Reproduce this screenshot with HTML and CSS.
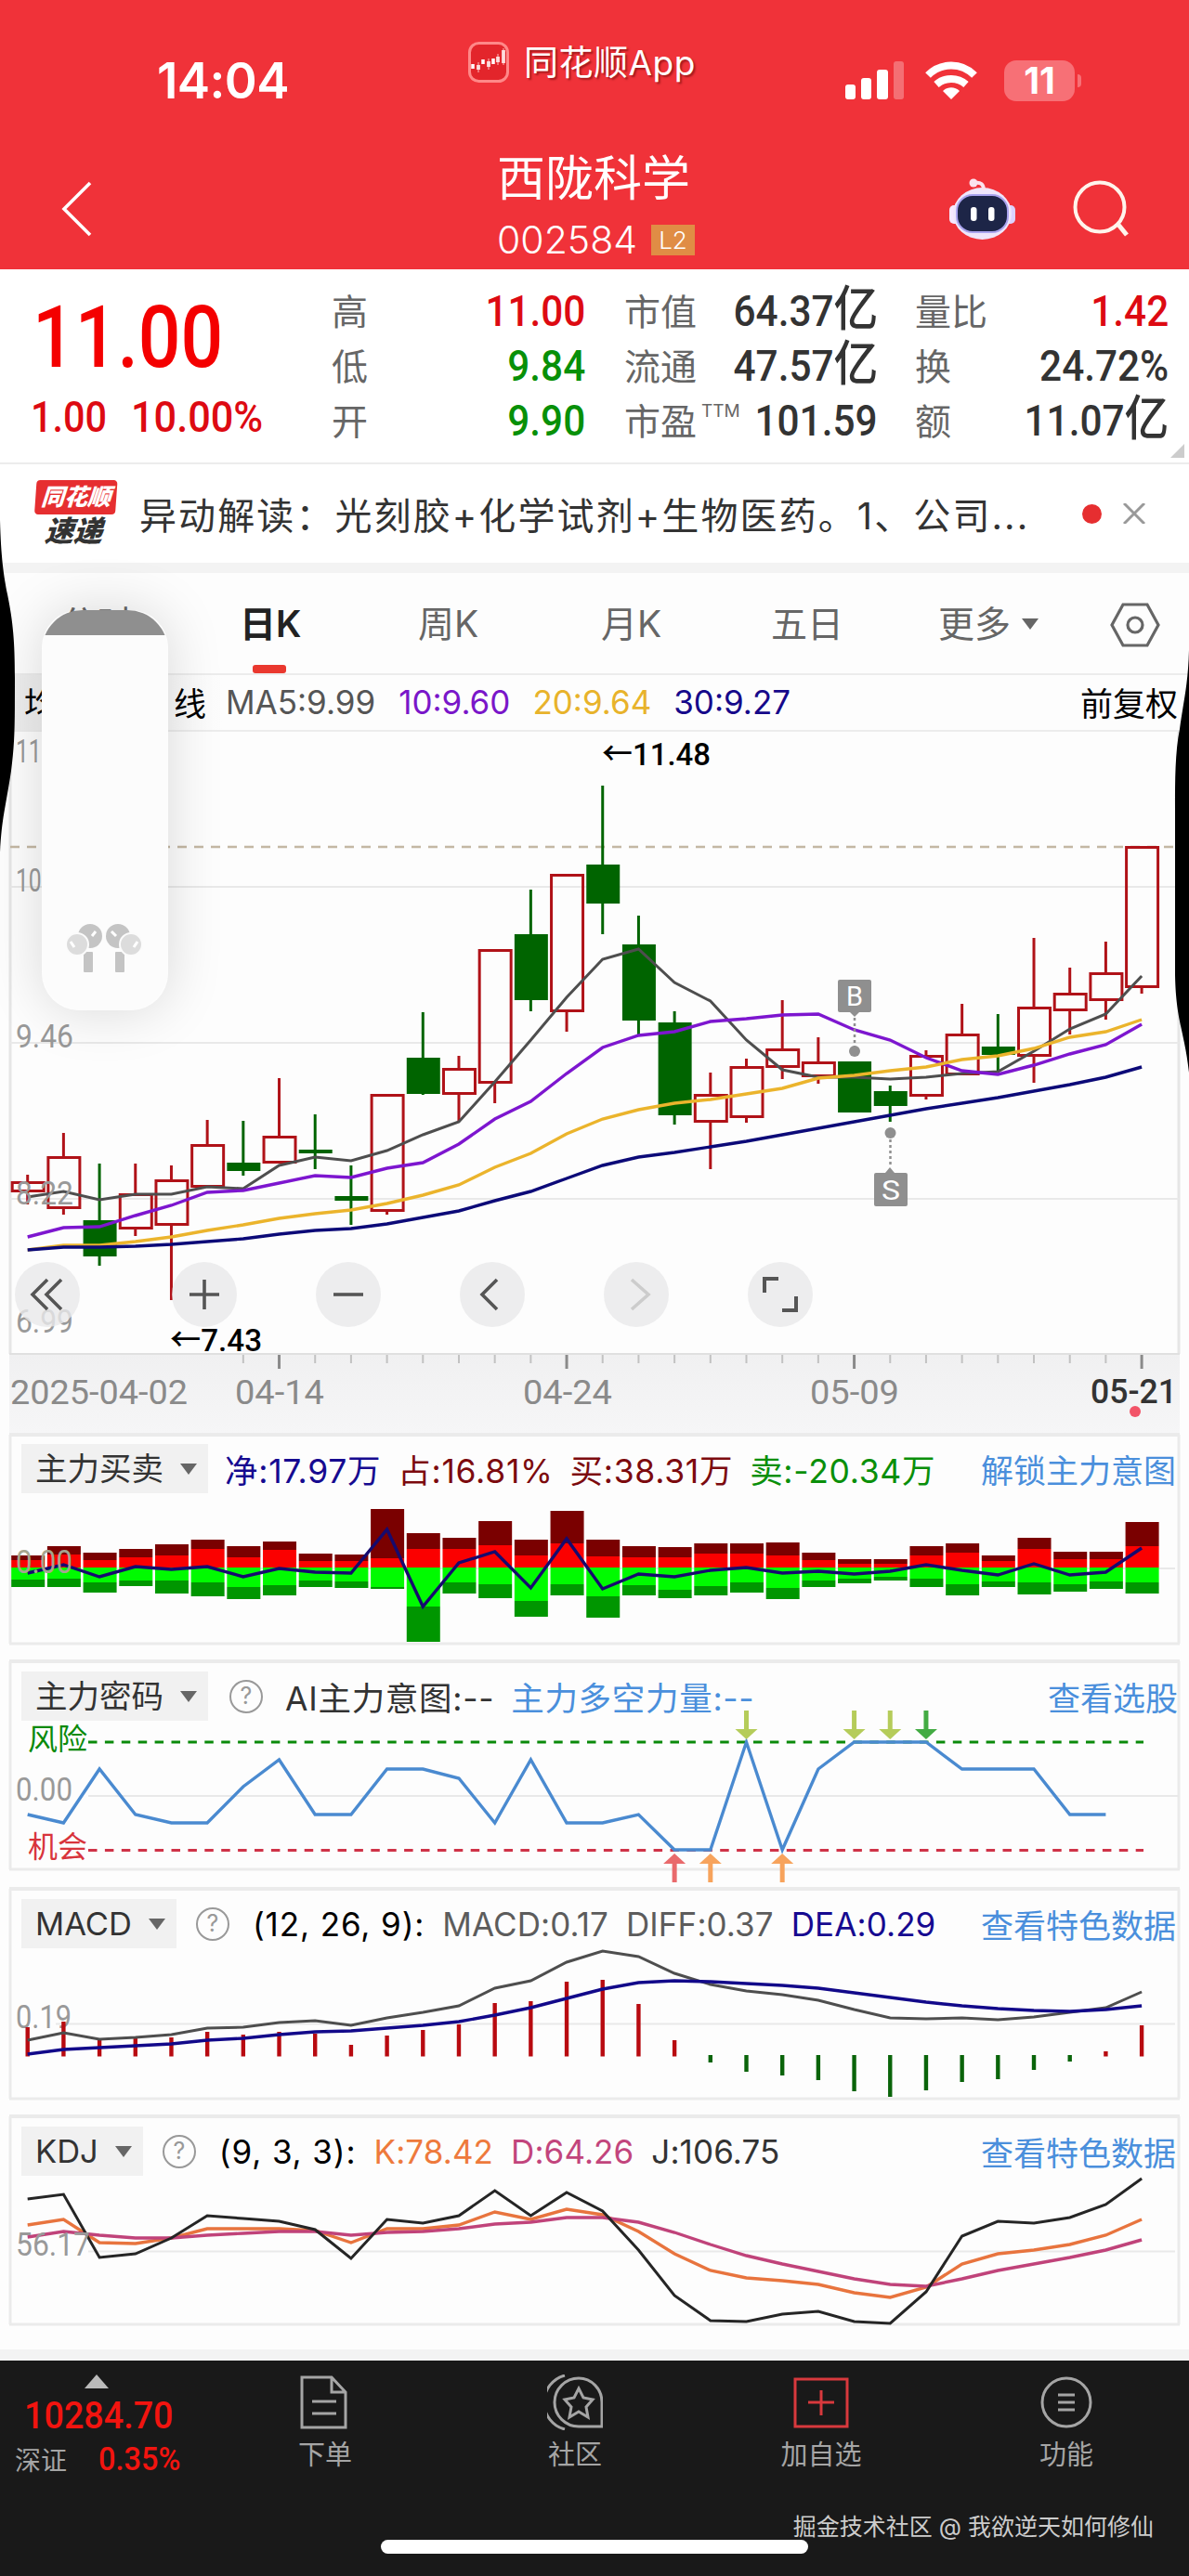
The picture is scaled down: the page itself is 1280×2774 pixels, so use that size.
FILE: index.html
```html
<!DOCTYPE html>
<html lang="zh-CN">
<head>
  <meta charset="UTF-8" />
  <meta name="viewport" content="width=device-width, initial-scale=1" />
  <title>西陇科学 002584</title>
  <link rel="stylesheet" href="styles.css">
</head>
<body>

  <header class="top">
    <div class="status">
      <div class="clock">14:04</div>
      <div class="app-tag">
        <svg class="app-logo" viewBox="0 0 44 44">
          <rect x="1.5" y="1.5" width="41" height="41" rx="10" fill="#e3252b" stroke="#f88" stroke-width="3"/>
          <path d="M5 24v5M11 25v5M16 19v5M22 21v6M27 18v6M32 16v6M38 9v14" stroke="#fff" stroke-width="3.500"/>
          <path d="M11 22v11M22 18v12M32 13v12M38 7v18" stroke="#fbb" stroke-width="1"/>
        </svg>
        <span>同花顺App</span>
      </div>
      <div class="signals">
        <svg width="66" height="42" viewBox="0 0 66 42" fill="#fff">
          <rect x="1" y="25" width="11" height="16" rx="3"/>
          <rect x="18" y="18" width="11" height="23" rx="3"/>
          <rect x="35" y="9" width="12" height="32" rx="3"/>
          <rect x="53" y="0" width="11" height="41" rx="3" opacity=".3"/>
        </svg>
        <svg width="58" height="42" viewBox="0 0 58 42" fill="none" stroke="#fff" stroke-width="8">
          <path d="M4 15C18 1 40 1 54 15"/>
          <path d="M13 25C22 17 36 17 45 25"/>
          <path d="M29 41L20 32C25 27 33 27 38 32Z" fill="#fff" stroke="none"/>
        </svg>
        <div class="battery">11</div>
      </div>
    </div>
    <div class="nav">
      <svg class="back" width="34" height="60" viewBox="0 0 34 60"><path d="M31 2L3 30l28 28" fill="none" stroke="#fff" stroke-width="3.6"/></svg>
      <div class="nav-title">
        <h1>西陇科学</h1>
        <div class="code">002584 <span class="l2">L2</span></div>
      </div>
      <svg class="robot" width="74" height="70" viewBox="1020 187 74 70">
        <rect x="1021" y="218" width="12" height="20" rx="5" fill="#f6e8ff"/>
        <rect x="1080" y="218" width="12" height="20" rx="5" fill="#dcd2ff"/>
        <ellipse cx="1056.500" cy="227" rx="31.500" ry="28" fill="#efe6fb"/>
        <path d="M1048 194q10-2 10 8" fill="none" stroke="#fbe3ee" stroke-width="4"/>
        <circle cx="1047" cy="194" r="4.500" fill="#fbe3ee"/>
        <rect x="1029" y="207" width="55" height="40" rx="17" fill="#1d2547" stroke="#a9a3ee" stroke-width="2"/>
        <rect x="1044" y="220" width="6.500" height="15" rx="3" fill="#fff"/>
        <rect x="1063" y="220" width="6.500" height="15" rx="3" fill="#fff"/>
      </svg>
      <svg class="search" width="64" height="64" viewBox="1152 192 64 64" fill="none" stroke="#fff4ec">
        <circle cx="1183" cy="222" r="26.500" stroke-width="4"/>
        <path d="M1203 241l9 11" stroke-width="5"/>
      </svg>
    </div>
  </header>

  <section class="quote">
    <div class="price">
      <div class="last din">11.00</div>
      <div class="change"><span class="din">1.00</span><span class="din pct">10.00%</span></div>
    </div>
    <dl class="stats">
      <dt>高</dt><dd class="red">11.00</dd>
      <dt>低</dt><dd class="green">9.84</dd>
      <dt>开</dt><dd class="green">9.90</dd>
    </dl>
    <dl class="stats">
      <dt>市值</dt><dd>64.37<em>亿</em></dd>
      <dt>流通</dt><dd>47.57<em>亿</em></dd>
      <dt>市盈<sup>TTM</sup></dt><dd>101.59</dd>
    </dl>
    <dl class="stats">
      <dt>量比</dt><dd class="red">1.42</dd>
      <dt>换</dt><dd>24.72%</dd>
      <dt>额</dt><dd>11.07<em>亿</em></dd>
    </dl>
    <i class="corner"></i>
  </section>

  <section class="news">
    <div class="news-logo"><b>同花顺</b><em>速递</em></div>
    <p>异动解读：光刻胶+化学试剂+生物医药。1、公司...</p>
    <i class="dot"></i>
    <svg width="24" height="22" viewBox="0 0 24 22"><path d="M1 0l22 22M23 0L1 22" stroke="#999" stroke-width="3"/></svg>
  </section>

  <nav class="tabs">
    <span class="tab-min">分时</span>
    <span class="active">日K</span>
    <span>周K</span>
    <span>月K</span>
    <span>五日</span>
    <span class="more">更多<i class="caret"></i></span>
    <svg width="54" height="48" viewBox="0 0 54 48" fill="none" stroke="#666" stroke-width="3.200"><path d="M2 24L14 2h26l12 22-12 22H14z"/><circle cx="27" cy="24" r="8"/></svg>
  </nav>

  <div class="ma-row">
    <span class="ma-name"><b>均</b><b>线</b></span>
    <span class="c-ma5">MA5:9.99</span>
    <span class="c-ma10">10:9.60</span>
    <span class="c-ma20">20:9.64</span>
    <span class="c-ma30">30:9.27</span>
    <span class="adjust">前复权</span>
  </div>

  <section class="kline">
    <svg id="kline" viewBox="0 788 1280 755"></svg>
    <div class="tools">
      <button><svg viewBox="-20 -20 40 40"><path d="M0-16L-16 0 0 16M15-16L-1 0l16 16"/></svg></button>
      <button><svg viewBox="-20 -20 40 40"><path d="M-16 0h32M0-16v32"/></svg></button>
      <button><svg viewBox="-20 -20 40 40"><path d="M-16 0h32"/></svg></button>
      <button><svg viewBox="-20 -20 40 40"><path d="M5-16L-11 0 5 16"/></svg></button>
      <button class="off"><svg viewBox="-20 -20 40 40"><path d="M-5-16L13 0-5 16"/></svg></button>
      <button><svg viewBox="-20 -20 40 40"><path d="M-17-2v-15H-2M17 2v15H2" stroke-width="4"/></svg></button>
    </div>
  </section>

  <section class="panel">
    <svg id="flow" viewBox="0 1543 1280 228"></svg>
    <div class="panel-head">
      <span class="pick">主力买卖<i class="caret"></i></span>
      <span class="navy">净:17.97万</span>
      <span class="maroon">占:16.81%</span>
      <span class="maroon">买:38.31万</span>
      <span class="leaf">卖:-20.34万</span>
      <a>解锁主力意图</a>
    </div>
  </section>

  <section class="panel code-panel">
    <svg id="secret" viewBox="0 1788 1280 228"></svg>
    <div class="panel-head">
      <span class="pick">主力密码<i class="caret"></i></span>
      <span class="help">?</span>
      <span>AI主力意图:--</span>
      <span class="blue">主力多空力量:--</span>
      <a>查看选股</a>
    </div>
  </section>

  <section class="panel index-panel">
    <svg id="macd" viewBox="0 2033 1280 228"></svg>
    <div class="panel-head">
      <span class="pick">MACD<i class="caret"></i></span>
      <span class="help">?</span>
      <span class="black">(12, 26, 9):</span>
      <span class="grey">MACD:0.17</span>
      <span class="grey">DIFF:0.37</span>
      <span class="navy">DEA:0.29</span>
      <a>查看特色数据</a>
    </div>
  </section>

  <section class="panel index-panel">
    <svg id="kdj" viewBox="0 2278 1280 228"></svg>
    <div class="panel-head">
      <span class="pick">KDJ<i class="caret"></i></span>
      <span class="help">?</span>
      <span class="black">(9, 3, 3):</span>
      <span class="orange">K:78.42</span>
      <span class="pink">D:64.26</span>
      <span>J:106.75</span>
      <a>查看特色数据</a>
    </div>
  </section>

  <footer class="bottom">
    <div class="index">
      <i class="up"></i>
      <strong class="din">10284.70</strong>
      <div><span>深证</span><b class="din">0.35%</b></div>
    </div>
    <div class="item">
      <svg viewBox="0 0 60 60"><path d="M5 3h32l15 16v38H5zM37 3v16h15M16 29h26M16 42h26"/></svg>下单
    </div>
    <div class="item">
      <svg viewBox="0 0 60 60"><path d="M34 4a25 25 0 1 0 0 52h25V30A25 26 0 0 0 34 4zM19 1A30 30 0 0 0 19 59M34 15l5 10 10 2-7 8 2 11-10-6-10 6 2-11-7-8 10-2z"/></svg>社区
    </div>
    <div class="item add">
      <svg viewBox="0 0 60 60"><path d="M2 5h56v51H2zM16 30h28M30 17v27"/></svg>加自选
    </div>
    <div class="item">
      <svg viewBox="0 0 60 60"><circle cx="30" cy="30" r="26"/><path d="M21 22h18M21 30h18M21 38h18"/></svg>功能
    </div>
    <div class="home-bar"></div>
    <div class="watermark">掘金技术社区 @ 我欲逆天如何修仙</div>
  </footer>

  <!-- volume HUD -->
  <div class="volume">
    <div class="volume-track">
      <svg viewBox="73 993 82 58">
        <g fill="#c4c4c4"><circle cx="98" cy="1008" r="13"/><circle cx="128" cy="1008" r="13"/><rect x="91" y="1025" width="10" height="22" rx="1"/><rect x="125" y="1025" width="10" height="22" rx="1"/></g>
        <g fill="#dcdcdc" stroke="#fbfbfb" stroke-width="2"><circle cx="84" cy="1017" r="12"/><circle cx="142" cy="1017" r="12"/></g>
        <path d="M104 1003l-4 5M121 1003l5 5M77 1014l4 6M149 1014l-4 6" stroke="#fff" stroke-width="3"/>
      </svg>
    </div>
  </div>

  <!-- side button bulges -->
  <svg class="edge edge-l" viewBox="0 560 18 360"><path d="M0 560C1 600 4 620 8 640C14 670 16 690 16 730C16 780 16 800 12 830C6 870 2 880 0 918Z"/></svg>
  <svg class="edge edge-r" viewBox="1262 700 18 460"><path d="M1280 700C1279 740 1273 760 1270 785C1265 810 1265 840 1265 870V1050C1266 1100 1275 1110 1280 1155Z"/></svg>

  <script src="charts.js"></script>
</body>
</html>
```

FILE: styles.css
```css
* {
  box-sizing: border-box;
}
body {
  position: relative;
  width: 1280px;
  margin: 0;
  background: #fdfdfd;
  color: #333;
  font-family: Inter, "Noto Sans CJK SC", sans-serif;
  font-size: 34px;
  overflow-x: hidden;
}
svg {
  display: block;
  flex: none;
}
i, em {
  font-style: normal;
}

/* numbers */
.din, .stats dd {
  font-family: Roboto, "Noto Sans CJK SC", sans-serif;
  font-weight: 500;
  white-space: nowrap;
}
.din {
  display: inline-block;
  transform: scaleX(.9);
  transform-origin: left;
}

/* header */
.top {
  height: 290px;
  background: #f03239;
  color: #fff;
}
.status {
  display: grid;
  grid-template-columns: 504px 405px 371px;
  align-items: center;
  height: 160px;
  padding-top: 14px;
}
.clock {
  padding-left: 169px;
  font-size: 53px;
  font-weight: 600;
  letter-spacing: -.6px;
}
.app-tag {
  display: flex;
  align-items: center;
  gap: 16px;
  margin-top: -41px;
  font-size: 37px;
  letter-spacing: .5px;
  text-shadow: 2px 2px 2px rgba(90,0,0,0.5);
}
.app-tag span {
  margin-top: -3px;
}
.app-logo {
  width: 44px;
  height: 44px;
}
.signals {
  display: flex;
  align-items: center;
  gap: 20px;
}
.battery {
  position: relative;
  width: 76px;
  height: 44px;
  margin-left: 8px;
  border-radius: 13px;
  background: #f77076;
  font-size: 39px;
  font-weight: 700;
  line-height: 44px;
  text-align: center;
}
.battery::after {
  content: "";
  position: absolute;
  right: -7px;
  top: 15px;
  width: 4px;
  height: 14px;
  border-radius: 0 4px 4px 0;
  background: #f77076;
}
.nav {
  display: grid;
  grid-template-columns: 66px 469px 486px 132px 127px;
  align-items: center;
  height: 128px;
}
.nav > svg {
  margin-top: -3px;
}
.back {
  grid-column: 2;
}
.nav-title {
  grid-column: 3;
}
.nav-title h1 {
  margin: 2px 0 0;
  font-size: 52px;
  font-weight: 400;
  line-height: 62px;
}
.code {
  display: flex;
  align-items: center;
  gap: 15px;
  height: 68px;
  font-size: 41px;
  font-weight: 300;
}
.l2 {
  width: 47px;
  height: 33px;
  background: #e08d45;
  font-size: 26px;
  line-height: 33px;
  text-align: center;
}

/* quote */
.quote {
  position: relative;
  display: grid;
  grid-template-columns: 322px 272px 270px 274px;
  column-gap: 43px;
  height: 210px;
  padding: 16px 0 0 35px;
  border-bottom: 2px solid #ececec;
  background: #fff;
}
.stats {
  display: grid;
  grid-template-columns: 80px 1fr;
  grid-auto-rows: 59px;
  align-items: center;
  margin: 0 0 0 -43px;
  width: 273px;
}
.price {
  padding-top: 3px;
  color: #f40000;
}
.last {
  font-size: 93px;
  line-height: 110px;
  transform: scaleX(.865);
}
.change {
  display: flex;
  gap: 17px;
  margin-left: -2px;
  color: #dd0a12;
  font-size: 46px;
  line-height: 60px;
}
.change .pct {
  transform: scaleX(.94);
}
.stats dt {
  color: #666;
  font-size: 39px;
  line-height: 59px;
  white-space: nowrap;
}
.stats dd {
  margin: 0;
  justify-self: end;
  font-size: 46px;
  line-height: 59px;
  transform: scaleX(.92);
  transform-origin: right;
}
.stats dd em {
  font-size: 52px;
  line-height: 1;
}
.stats sup {
  margin-left: 5px;
  font-size: 19px;
  vertical-align: 19px;
  line-height: 0;
}
.stats .red {
  color: #dd0a12;
}
.stats .green {
  color: #089008;
}
.corner {
  position: absolute;
  right: 5px;
  bottom: 5px;
  border-left: 15px solid transparent;
  border-bottom: 15px solid #ccc;
}

/* news */
.news {
  display: flex;
  align-items: center;
  height: 106px;
  padding-left: 37px;
  background: #fff;
}
.news-logo {
  width: 87px;
  margin-right: 26px;
  font-style: italic;
  font-weight: 900;
  text-align: center;
  transform: skewX(-4deg);
}
.news-logo b {
  display: block;
  border-radius: 4px;
  background: #e62e30;
  color: #fff;
  font-size: 25px;
  line-height: 37px;
}
.news-logo em {
  display: block;
  font-size: 31px;
  font-style: italic;
  line-height: 36px;
}
.news p {
  width: 1015px;
  margin: 0;
  font-size: 40px;
  letter-spacing: 2.1px;
  white-space: nowrap;
}
.dot {
  width: 21px;
  height: 21px;
  margin-right: 23px;
  border-radius: 50%;
  background: #e62e30;
}

/* tabs */
.tabs {
  display: grid;
  grid-template-columns: 65px 193px 192px 197px 183px 180px 185px 85px;
  align-items: center;
  height: 121px;
  padding-top: 3px;
  border-top: 11px solid #f3f3f3;
  border-bottom: 2px solid #ececec;
  color: #666;
  font-size: 39px;
  line-height: 96px;
}
.tabs > span {
  margin-top: -2px;
}
.tab-min {
  grid-column: 2;
}
.active {
  position: relative;
  color: #222;
  font-weight: 600;
}
.active::after {
  content: "";
  position: absolute;
  left: 14px;
  bottom: -5px;
  width: 36px;
  height: 9px;
  border-radius: 3px;
  background: #ea382f;
}
.caret {
  display: inline-block;
  border: 9px solid transparent;
  border-top: 12px solid #666;
  border-bottom: 0;
}
.more .caret {
  margin-left: 12px;
  vertical-align: 8px;
}

/* moving averages */
.ma-row {
  display: flex;
  align-items: center;
  height: 61px;
  padding: 0 12px 2px 26px;
  border-bottom: 2px solid #ececec;
  background: linear-gradient(90deg, #ececec 0, #fdfdfd 240px);
  font-size: 35px;
  gap: 24px;
}
.ma-name {
  display: flex;
  justify-content: space-between;
  width: 196px;
  margin-right: -3px;
  color: #000;
}
.ma-name b {
  font-weight: 400;
}
.c-ma5 { color: #555; margin-right: 1px; }
.c-ma10 { color: #7a16c9; }
.c-ma20 { color: #e8b32b; }
.c-ma30 { color: #16098a; }
.adjust {
  margin-left: auto;
  color: #000;
}

/* charts */
.kline, .panel {
  display: grid;
}
.kline > *, .panel > * {
  grid-area: 1 / 1;
}
.kline svg, .panel svg {
  overflow: visible;
}
.tools {
  display: flex;
  align-self: end;
  gap: 85px;
  height: 70px;
  margin: 0 0 114px 16px;
}
.tools button {
  width: 70px;
  height: 70px;
  padding: 0;
  border: 0;
  border-radius: 50%;
  background: rgba(232,232,234,0.8);
}
.tools button:first-child {
  margin-right: 14px;
}
.tools svg {
  width: 40px;
  height: 40px;
  margin: auto;
  fill: none;
  stroke: #555;
  stroke-width: 3.6;
}
.tools .off svg {
  stroke: #ccc;
}
.panel {
  height: 228px;
  margin-bottom: 17px;
}
.panel-head {
  display: flex;
  align-items: center;
  align-self: start;
  gap: 18px;
  height: 53px;
  margin: 12px 14px 0 23px;
  font-size: 35.5px;
  letter-spacing: .7px;
  white-space: nowrap;
}
.panel-head a {
  margin-left: auto;
  color: #4a8fdc;
  font-size: 35px;
  letter-spacing: 0;
}
.pick {
  height: 53px;
  padding: 0 12px 0 15px;
  background: #f1f1f1;
  font-size: 34.5px;
  letter-spacing: 0;
  line-height: 53px;
}
.pick .caret {
  margin-left: 18px;
  vertical-align: 6px;
}
.help {
  width: 36px;
  height: 36px;
  margin: 0 6px 0 2px;
  border: 2.5px solid #999;
  border-radius: 50%;
  color: #999;
  font-size: 25px;
  letter-spacing: 0;
  line-height: 31px;
  text-align: center;
}
.code-panel a {
  margin-right: -2px;
}
.code-panel .help {
  margin-left: 5px;
}
.index-panel .panel-head {
  gap: 19px;
  font-size: 35px;
  letter-spacing: .1px;
}
.index-panel .black {
  letter-spacing: .9px;
}
.navy { color: #160a90; }
.maroon { color: #7c0a0e; }
.leaf { color: #0a8f0a; }
.blue { color: #4a8fdc; }
.black { color: #000; }
.grey { color: #5c5c5c; }
.orange { color: #ee7a3c; }
.pink { color: #c2457c; }

/* bottom bar */
.bottom {
  position: relative;
  display: grid;
  grid-template-columns: 236px 228px 310px 220px 308px;
  align-items: start;
  height: 244px;
  margin-top: 24px;
  border-top: 12px solid #f3f3f3;
  background: #191919;
  color: #a5a5a5;
}
.index {
  padding: 15px 0 0 16px;
}
.up {
  display: block;
  width: 0;
  margin-left: 75px;
  border: 13px solid transparent;
  border-top: 0;
  border-bottom: 15px solid #bbb;
}
.index .din {
  color: #f2140f;
}
.index strong {
  display: block;
  margin-left: 10px;
  font-size: 41px;
  line-height: 54px;
  margin-top: 2px;
  transform: scaleX(.92);
}
.index div {
  display: flex;
  align-items: center;
  gap: 34px;
  height: 40px;
  margin-top: 0;
  font-size: 28px;
}
.index b {
  font-size: 35px;
  transform: scaleX(.93);
}
.item {
  display: flex;
  flex-direction: column;
  align-items: center;
  padding-top: 15px;
  font-size: 29px;
  line-height: 54px;
}
.item svg {
  width: 60px;
  height: 60px;
  fill: none;
  stroke: #a5a5a5;
  stroke-width: 3;
}
.item.add svg {
  stroke: #d8393d;
}
.home-bar {
  position: absolute;
  left: 410px;
  bottom: 24px;
  width: 460px;
  height: 15px;
  border-radius: 8px;
  background: #fff;
}
.watermark {
  position: absolute;
  right: 38px;
  bottom: 34px;
  color: #ccc;
  font-size: 25px;
  line-height: 38px;
  white-space: nowrap;
}

/* overlays */
.volume {
  position: absolute;
  left: 45px;
  top: 657px;
  width: 136px;
  height: 431px;
  border-radius: 40px;
  box-shadow: 0 0 60px rgba(0,0,0,0.15);
}
.volume-track {
  display: flex;
  align-items: flex-end;
  justify-content: center;
  height: 100%;
  padding-bottom: 37px;
  border-radius: 44px;
  background: linear-gradient(#8f8f8f 27px, #fcfcfc 27px);
}
.volume svg {
  width: 82px;
}
.edge {
  position: absolute;
  width: 18px;
}
.edge-l {
  left: 0;
  top: 560px;
}
.edge-r {
  right: 0;
  top: 700px;
}
```

FILE: charts.js
```js
const STEP = 38.69;
const X = i => 29.7 + STEP * i;
const RED = '#b01218';
const GREEN = '#006400';

function line(ys, color, width = 3.4) {
  const pts = ys.map((y, i) => `${X(i).toFixed(1)},${y}`).join(' ');
  return `<polyline points="${pts}" fill="none" stroke="${color}" stroke-width="${width}"/>`;
}
function rect(x, y, w, h, fill) {
  return `<rect x="${x}" y="${y}" width="${w}" height="${h}" fill="${fill}"/>`;
}
function seg(x1, y1, x2, y2, color, w = 2, extra = '') {
  return `<line x1="${x1}" y1="${y1}" x2="${x2}" y2="${y2}" stroke="${color}" stroke-width="${w}" ${extra}/>`;
}
function label(x, y, w, str, color = '#999', size = 35, weight = 400, mode = 'spacingAndGlyphs') {
  return `<text x="${x}" y="${y}" textLength="${w}" lengthAdjust="${mode}" font-family="Roboto, Noto Sans CJK SC, sans-serif" font-size="${size}" font-weight="${weight}" fill="${color}">${str}</text>`;
}
function frame(y1, y2, top = 4) {
  return seg(10, y1, 1270, y1, '#ebebeb', top) + seg(10, y2, 1270, y2, '#ebebeb', 3) +
    seg(11, y1, 11, y2, '#ebebeb', 3) + seg(1269, y1, 1269, y2, '#ebebeb', 3);
}

// [up, high, low, bodyTop, bodyBottom]
const candles = [
  [1,1265,1297,1273,1282],[1,1220,1308,1246,1300],[0,1253,1363,1314,1353],[1,1253,1331,1286,1322],
  [1,1255,1400,1271,1318],[1,1206,1278,1233,1277],[0,1207,1266,1252,1261],[1,1161,1252,1224,1251],
  [0,1200,1259,1238,1242],[0,1255,1319,1288,1293],[1,1179,1308,1179,1303],[0,1090,1179,1139,1178],
  [1,1137,1207,1151,1177],[1,1023,1188,1023,1165],[0,958,1089,1006,1077],[1,942,1111,942,1088],
  [0,846,1006,931,973],[0,986,1114,1017,1099],[0,1089,1211,1101,1201],[1,1155,1259,1179,1207],
  [1,1140,1209,1149,1202],[1,1077,1162,1130,1148],[1,1117,1167,1144,1158],[0,1143,1198,1143,1198],
  [0,1169,1208,1175,1191],[1,1131,1184,1137,1179],[1,1081,1157,1114,1156],[0,1092,1153,1127,1136],
  [1,1010,1166,1085,1136],[1,1042,1114,1070,1087],[1,1014,1098,1048,1076],[1,912,1070,912,1062]
];
const ma5 = [1289,1283,1292,1286,1286,1278,1280,1255,1246,1250,1239,1222,1208,1165,1120,1074,1033,1022,1058,1078,1120,1152,1160,1160,1162,1160,1156,1154,1132,1108,1092,1051];
const ma10 = [1332,1322,1321,1309,1298,1284,1282,1274,1266,1268,1258,1252,1232,1205,1186,1156,1128,1115,1111,1100,1097,1093,1092,1109,1120,1139,1153,1157,1147,1135,1125,1103];
const ma20 = [1346,1341,1341,1337,1332,1325,1319,1312,1307,1303,1296,1287,1276,1257,1242,1221,1205,1195,1188,1184,1178,1172,1161,1158,1153,1149,1141,1137,1129,1117,1111,1098];
const ma30 = [1346,1343,1343,1342,1340,1337,1334,1329,1325,1323,1318,1311,1304,1293,1283,1269,1255,1246,1241,1235,1229,1222,1215,1208,1201,1194,1188,1182,1175,1168,1160,1149];

function drawKline() {
  let s = '<defs><linearGradient id="axis" x2="0" y2="1"><stop stop-color="#f0f0f1"/><stop offset="1" stop-color="#f6f6f7"/></linearGradient></defs>';
  s += rect(10, 1458, 1260, 86, 'url(#axis)');
  s += seg(11, 788, 11, 1458, '#e6e6e6', 3) + seg(1269, 788, 1269, 1458, '#e6e6e6', 3) + seg(10, 1458, 1270, 1458, '#e0e0e0', 2);
  [955, 1123, 1291].forEach(y => { s += seg(11, y, 1269, y, '#e9e9e9'); });
  s += seg(11, 912, 1269, 912, '#c4b8a4', 2.4, 'stroke-dasharray="10 8"');

  candles.forEach(([up, hi, lo, t, b], i) => {
    const x = X(i), c = up ? RED : GREEN;
    if (up) {
      s += seg(x, hi, x, t, c, 3) + seg(x, b, x, lo, c, 3);
      s += `<rect x="${x - 16.5}" y="${t + 0.5}" width="34" height="${b - t}" fill="none" stroke="${c}" stroke-width="3"/>`;
    } else {
      s += seg(x, hi, x, lo, c, 3) + rect(x - 17.5, t, 36, b - t, c);
    }
  });
  s += line(ma5, '#4e4e4e', 3) + line(ma10, '#7d16cf') + line(ma20, '#ebb42c') + line(ma30, '#0c0a78');

  // trade marks
  const g = '#8f8f8f';
  s += `<rect x="902" y="1055" width="36" height="35" rx="2" fill="${g}"/><path d="M915 1090h10l-5 5z" fill="${g}"/><circle cx="920" cy="1132" r="6" fill="${g}"/>`;
  s += seg(920, 1096, 920, 1128, g, 2.5, 'stroke-dasharray="3 3"') + label(911, 1083, 18, 'B', '#fff', 30);
  s += `<rect x="941" y="1263" width="36" height="36" rx="2" fill="${g}"/><path d="M953 1263h10l-5-6z" fill="${g}"/><circle cx="958.500" cy="1220" r="6" fill="${g}"/>`;
  s += seg(958.5, 1227, 958.5, 1256, g, 2.5, 'stroke-dasharray="3 3"') + label(949, 1292, 20, 'S', '#fff', 30);
  s += label(648, 824, 117, '←11.48', '#000', 34, 500) + label(183, 1455, 99, '←7.43', '#000', 34, 500);

  s += label(17, 821, 62, '11.93') + label(17, 960, 62, '10.69') + label(17, 1128, 62, '9.46') + label(17, 1297, 62, '8.22') + label(17, 1435, 62, '6.99');

  for (let i = 6; i < 32; i++) {
    const major = i % 8 === 7;
    s += seg(X(i), 1459, X(i), major ? 1474 : 1468, major ? '#8a8a8a' : '#c2c2c2', major ? 3 : 2);
  }
  s += label(11, 1512, 191, '2025-04-02', '#8a8a8a', 36) + label(253, 1512, 96, '04-14', '#8a8a8a', 36) +
    label(563, 1512, 96, '04-24', '#8a8a8a', 36) + label(872, 1512, 96, '05-09', '#8a8a8a', 36) + label(1174, 1511, 93, '05-21', '#333', 36, 500);
  s += '<circle cx="1222" cy="1520" r="6" fill="#f25468"/>';
  document.getElementById('kline').innerHTML = s;
}

// [top, largeBuy/smallBuy split, sell split, bottom]
const flow = [
  [1675,1680,1701,1709],[1665,1674,1700,1709],[1672,1680,1704,1715],[1668,1677,1702,1708],[1663,1675,1702,1716],
  [1658,1668,1704,1719],[1665,1677,1709,1722],[1660,1669,1707,1718],[1673,1681,1702,1709],[1674,1681,1703,1710],
  [1625,1678,1709,1711],[1651,1668,1730,1768],[1656,1668,1704,1716],[1638,1664,1706,1721],[1658,1675,1724,1741],
  [1627,1662,1706,1718],[1658,1676,1719,1742],[1665,1677,1707,1718],[1666,1677,1712,1721],[1662,1673,1708,1718],
  [1662,1673,1704,1715],[1661,1675,1710,1722],[1672,1680,1702,1709],[1679,1684,1700,1705],[1679,1684,1698,1702],
  [1665,1675,1700,1709],[1662,1672,1706,1718],[1675,1681,1703,1709],[1656,1668,1704,1717],[1671,1679,1706,1714],
  [1671,1679,1703,1711],[1639,1665,1704,1716]
];
const net = [1694,1685,1698,1687,1690,1687,1698,1689,1693,1694,1647,1730,1683,1671,1710,1657,1711,1695,1698,1691,1688,1694,1692,1695,1692,1685,1691,1696,1684,1696,1693,1667];

function drawFlow() {
  let s = frame(1545, 1770) + seg(11, 1689, 1265, 1689, '#e9e9e9');
  flow.forEach(([t, m, g, b], i) => {
    const x = X(i) - 17.5;
    s += rect(x, t, 36, m - t, '#7a0000') + rect(x, m, 36, 1688 - m, '#fb0000') +
      rect(x, 1688, 36, g - 1688, '#00fb00') + rect(x, g, 36, b - g, '#009600');
  });
  s += line(net, '#160a6e') + label(17, 1694, 61, '0.00', '#a5a58f');
  document.getElementById('flow').innerHTML = s;
}

const power = [1954,1963,1905,1954,1963,1963,1924,1895,1954,1954,1905,1905,1915,1963,1895,1963,1963,1954,1992,1992,1876,1992,1905,1876,1876,1876,1905,1905,1905,1954,1954];

function arrow(i, y, dir, color) {
  const x = X(i);
  return `<path d="M${x} ${y}l-12 ${-11 * dir}h24z" fill="${color}"/>` + seg(x, y - 8 * dir, x, y - 31 * dir, color, 5);
}
function drawSecret() {
  let s = frame(1789, 2013) + seg(95, 1934, 1269, 1934, '#e9e9e9');
  s += seg(95, 1876, 1231, 1876, '#0a8a0a', 3, 'stroke-dasharray="9.5 8.400"') + seg(95, 1992.5, 1231, 1992.5, '#cf3348', 3, 'stroke-dasharray="9.5 8.400"');
  s += line(power, '#4a8ad0');
  s += label(30, 1884, 64, '风险', '#0a8a0a', 32) + label(30, 2000, 64, '机会', '#d8343c', 32) + label(17, 1939, 61, '0.00');
  s += arrow(20, 1873, 1, '#b5cc5a') + arrow(23, 1873, 1, '#b5cc5a') + arrow(24, 1873, 1, '#b5cc5a') + arrow(25, 1873, 1, '#43ab43');
  s += arrow(18, 1996, -1, '#e96a6c') + arrow(19, 1996, -1, '#f7a35c') + arrow(21, 1996, -1, '#f7a35c');
  document.getElementById('secret').innerHTML = s;
}

const bars = [2183,2177,2197,2195,2194,2188,2191,2188,2190,2202,2192,2186,2180,2157,2155,2134,2132,2158,2197,2221,2231,2235,2240,2252,2258,2251,2242,2239,2229,2220,2209,2181];
const diff = [2197,2189,2196,2194,2191,2184,2183,2178,2176,2181,2173,2167,2160,2141,2133,2113,2101,2107,2125,2137,2144,2148,2154,2164,2173,2174,2173,2175,2172,2167,2162,2145];
const dea = [2212,2207,2205,2203,2201,2197,2195,2191,2188,2187,2184,2181,2177,2170,2162,2152,2142,2135,2133,2134,2136,2138,2141,2146,2151,2156,2160,2163,2165,2166,2164,2160];

function drawMacd() {
  let s = frame(2034, 2260) + seg(60, 2179.5, 1265, 2179.5, '#e9e9e9') + label(17, 2184, 60, '0.19');
  bars.forEach((y, i) => {
    s += y < 2214 ? seg(X(i), y, X(i), 2214.5, '#b80a10', 4.4) : seg(X(i), 2213, X(i), y, '#0a640a', 4.4);
  });
  s += line(diff, '#4e4e4e', 3) + line(dea, '#12098a');
  document.getElementById('macd').innerHTML = s;
}

const kLine = [2396,2390,2415,2416,2410,2400,2400,2400,2402,2415,2400,2400,2396,2382,2390,2379,2385,2403,2427,2445,2453,2456,2460,2469,2474,2463,2438,2427,2423,2417,2407,2390];
const dLine = [2409,2403,2407,2410,2410,2407,2405,2403,2403,2407,2404,2403,2400,2395,2393,2388,2388,2393,2404,2417,2429,2438,2446,2454,2460,2462,2454,2445,2438,2431,2423,2412];
const jLine = [2368,2363,2431,2427,2410,2386,2389,2392,2401,2432,2390,2394,2386,2359,2386,2361,2381,2423,2472,2499,2500,2492,2489,2500,2502,2468,2408,2392,2394,2388,2374,2346];

function drawKdj() {
  let s = frame(2279, 2503) + seg(95, 2424.5, 1265, 2424.5, '#e9e9e9');
  s += line(kLine, '#e8743e') + line(dLine, '#c0437a') + line(jLine, '#252525', 3) + label(17, 2429, 80, '56.17');
  document.getElementById('kdj').innerHTML = s;
}

drawKline();
drawFlow();
drawSecret();
drawMacd();
drawKdj();
```
